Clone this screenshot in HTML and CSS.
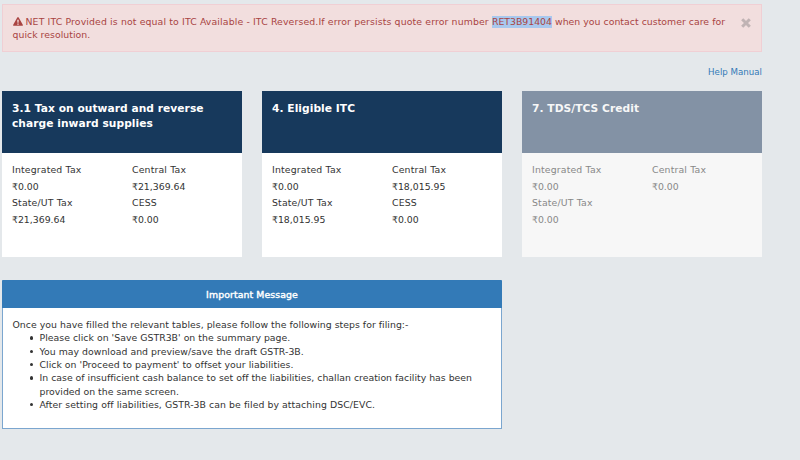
FILE: index.html
```html
<!DOCTYPE html>
<html lang="en">
<head>
  <meta charset="UTF-8" />
  <meta name="viewport" content="width=device-width, initial-scale=1.0" />
  <title>GSTR-3B</title>
  <link rel="stylesheet" href="styles.css">
</head>
<body>
  <div class="container">
    <div class="alert">
      <p>
        <svg class="warn" viewBox="0 0 18 16"><path fill="currentColor" fill-rule="evenodd" d="M9 0.2c.6 0 1 .3 1.3.8l7.3 12.8c.6 1-.1 2-1.2 2H1.6c-1.1 0-1.8-1-1.2-2L7.7 1C8 .5 8.4.2 9 .2zM7.6 5l.4 5.4h2L10.4 5zM7.8 11.5v2.3h2.4v-2.3z"/></svg>
        <span class="reason">NET ITC Provided is not equal to ITC Available - ITC Reversed.If error persists quote error number </span><span class="selected">RET3B91404</span> when you contact customer care for<br>
        quick resolution.
      </p>
      <svg class="close" viewBox="0 0 10 10"><path d="M1.2 1.2l7.6 7.6M8.8 1.2L1.2 8.8" stroke="currentColor" stroke-width="3"/></svg>
    </div>

    <a class="help">Help Manual</a>

    <div class="cards">
      <div class="card">
        <h4>3.1 Tax on outward and reverse<br>charge inward supplies</h4>
        <div class="values">
          <label>Integrated Tax</label><label>Central Tax</label>
          <span>₹0.00</span><span>₹21,369.64</span>
          <label>State/UT Tax</label><label>CESS</label>
          <span>₹21,369.64</span><span>₹0.00</span>
        </div>
      </div>
      <div class="card">
        <h4>4. Eligible ITC</h4>
        <div class="values">
          <label>Integrated Tax</label><label>Central Tax</label>
          <span>₹0.00</span><span>₹18,015.95</span>
          <label>State/UT Tax</label><label>CESS</label>
          <span>₹18,015.95</span><span>₹0.00</span>
        </div>
      </div>
      <div class="card disabled">
        <h4>7. TDS/TCS Credit</h4>
        <div class="values">
          <label>Integrated Tax</label><label>Central Tax</label>
          <span>₹0.00</span><span>₹0.00</span>
          <label>State/UT Tax</label><label></label>
          <span>₹0.00</span>
        </div>
      </div>
    </div>

    <div class="panel">
      <div class="panel-heading">Important Message</div>
      <div class="panel-body">
        Once you have filled the relevant tables, please follow the following steps for filing:-
        <ul>
          <li>Please click on 'Save GSTR3B' on the summary page.</li>
          <li>You may download and preview/save the draft GSTR-3B.</li>
          <li>Click on 'Proceed to payment' to offset your liabilities.</li>
          <li class="long">In case of insufficient cash balance to set off the liabilities, challan creation facility has been<br>provided on the same screen.</li>
          <li class="last">After setting off liabilities, GSTR-3B can be filed by attaching DSC/EVC.</li>
        </ul>
      </div>
    </div>
  </div>
</body>
</html>
```
FILE: styles.css
```css
* {
  box-sizing: border-box;
}
body {
  margin: 0;
  background: #e4e8eb;
  color: #333;
  font-family: Verdana, "DejaVu Sans", sans-serif;
  font-size: 9.33px;
  line-height: 13.33px;
  overflow: hidden;
}
.container {
  width: 760px;
  margin: 4px 0 0 2px;
}
/* Error alert */
.alert {
  display: flex;
  justify-content: space-between;
  height: 48px;
  padding: 10px 10px 0 9.5px;
  background: #f2dede;
  border: 1px solid #f0cfd4;
  color: #a94442;
}
.alert p {
  margin: 0;
  letter-spacing: 0.03px;
  white-space: nowrap;
}
.reason {
  letter-spacing: 0.13px;
}
.warn {
  width: 10px;
  height: 9px;
  vertical-align: -1px;
}
.selected {
  display: inline-block;
  height: 11.5px;
  letter-spacing: 0;
  line-height: 11.5px;
  background: #a8c8ee;
}
.close {
  width: 10px;
  height: 10px;
  margin-top: 2.5px;
  color: #c0b3b4;
}
.help {
  display: block;
  margin-top: 13px;
  height: 14px;
  text-align: right;
  font-size: 8.67px;
  line-height: 14px;
  color: #337ab7;
}
/* Tax summary cards */
.cards {
  display: grid;
  grid-template-columns: repeat(3, 240px);
  gap: 20px;
  margin-top: 12px;
}
.card {
  height: 165.6px;
  background: #fff;
}
.card h4 {
  height: 62px;
  margin: 0;
  padding: 11px 10px 0;
  background: #17395c;
  color: #fff;
  font-size: 10.67px;
  letter-spacing: 0.05px;
  line-height: 14.67px;
  white-space: nowrap;
}
.values {
  display: grid;
  grid-template-columns: 120px 1fr;
  grid-auto-rows: 16.67px;
  padding: 9px 10px 0;
  line-height: 16.67px;
}
.values label {
  letter-spacing: 0.16px;
}
.disabled {
  background: #f7f7f7;
  color: #888;
}
.disabled h4 {
  background: #8392a5;
  color: #f7f7f7;
}
/* Filing steps */
.panel {
  width: 500px;
  height: 148.6px;
  margin-top: 23.4px;
  background: #fff;
  border: 1px solid #7ba6cf;
  border-top-color: #337ab7;
}
.panel-heading {
  height: 27px;
  margin: 0 -1px;
  background: #337ab7;
  color: #fff;
  text-align: center;
  letter-spacing: 0.1px;
  line-height: 27px;
  -webkit-text-stroke: 0.4px #fff;
}
.panel-body {
  padding: 10px 9.5px 0;
  letter-spacing: 0.03px;
  white-space: nowrap;
}
.panel ul {
  margin: 0;
  padding-left: 27px;
  list-style: none;
}
.panel li::before {
  content: "";
  display: inline-block;
  width: 3.4px;
  height: 3.4px;
  margin: 0 6.6px 1.5px -10px;
  border-radius: 50%;
  background: #333;
}
.panel li.long {
  letter-spacing: 0.01px;
}
.panel li.last {
  letter-spacing: 0.07px;
}
```
